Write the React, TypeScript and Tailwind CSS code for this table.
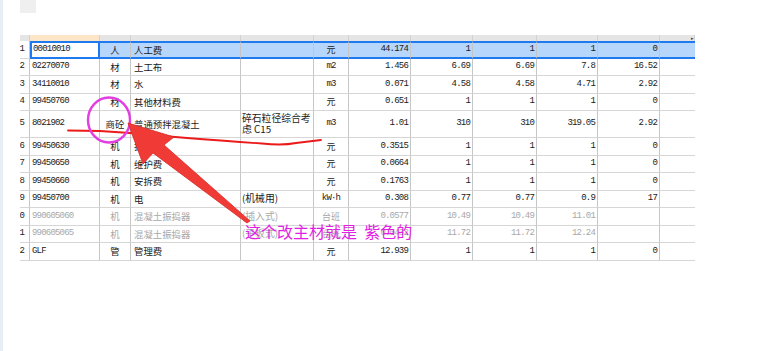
import React from "react";

type Row = {
  n: string;
  code: string;
  type: string;
  name: string;
  spec: string[];
  unit: string;
  vals: string[];
  gray?: boolean;
  tall?: boolean;
  sel?: boolean;
};

const rows: Row[] = [
  { n: "1", code: "00010010", type: "人", name: "人工费", spec: [], unit: "元", vals: ["44.174", "1", "1", "1", "0"], sel: true },
  { n: "2", code: "02270070", type: "材", name: "土工布", spec: [], unit: "m2", vals: ["1.456", "6.69", "6.69", "7.8", "16.52"] },
  { n: "3", code: "34110010", type: "材", name: "水", spec: [], unit: "m3", vals: ["0.071", "4.58", "4.58", "4.71", "2.92"] },
  { n: "4", code: "99450760", type: "材", name: "其他材料费", spec: [], unit: "元", vals: ["0.651", "1", "1", "1", "0"] },
  { n: "5", code: "8021902", type: "商砼", name: "普通预拌混凝土", spec: ["碎石粒径综合考", "虑 C15"], unit: "m3", vals: ["1.01", "310", "310", "319.05", "2.92"], tall: true },
  { n: "6", code: "99450630", type: "机", name: "折旧费", spec: [], unit: "元", vals: ["0.3515", "1", "1", "1", "0"] },
  { n: "7", code: "99450650", type: "机", name: "维护费", spec: [], unit: "元", vals: ["0.0664", "1", "1", "1", "0"] },
  { n: "8", code: "99450660", type: "机", name: "安拆费", spec: [], unit: "元", vals: ["0.1763", "1", "1", "1", "0"] },
  { n: "9", code: "99450700", type: "机", name: "电", spec: ["(机械用)"], unit: "kW·h", vals: ["0.308", "0.77", "0.77", "0.9", "17"] },
  { n: "10", code: "990605060", type: "机", name: "混凝土振捣器", spec: ["(插入式)"], unit: "台班", vals: ["0.0577", "10.49", "10.49", "11.01", ""], gray: true },
  { n: "11", code: "990605065", type: "机", name: "混凝土振捣器", spec: ["(平板式)"], unit: "台班", vals: ["0.0432", "11.72", "11.72", "12.24", ""], gray: true },
  { n: "12", code: "GLF", type: "管", name: "管理费", spec: [], unit: "元", vals: ["12.939", "1", "1", "1", "0"] },
];

const cjk = { fontFamily: '"Noto Sans CJK SC", "Noto Sans", sans-serif' };
const mono = { fontFamily: '"Liberation Mono", "Noto Sans CJK SC", monospace', letterSpacing: "-0.8px" };

const headerW = [10, 70, 31, 110, 73, 35, 62, 62, 64, 61, 62, 35];
const cols = "grid grid-cols-[10px_70px_31px_110px_73px_35px_62px_62px_64px_61px_62px_35px]";

function App() {
  return (
    <div className="relative flex w-[780px] h-[351px] overflow-hidden bg-white">
      <div className="w-[3px] shrink-0 bg-[#e8eef6]" />
      <div className="flex flex-col pl-[17px]">
        <div className="w-[16px] h-[13px] bg-[#efefef]" />
        <div className="h-[22px]" />
        {/* header */}
        <div className={"relative h-[6px] bg-[#e5e5e5] " + cols}>
          {headerW.map((_, i) => (
            <div
              key={i}
              className={"h-[6px] border-r border-[#d2d2d2] " + (i === 1 ? "bg-[#fde6c8]" : "")}
            />
          ))}
          <div className="absolute right-[1px] top-[1px] text-[5px] leading-[5px] text-[#444]">▸</div>
        </div>
        {/* rows */}
        {rows.map((r) => {
          const txt = r.gray ? "text-[#a8a8a8]" : "text-[#1a1a1a]";
          const h = r.tall ? "h-[27px]" : "h-[17.5px]";
          const line = r.sel
            ? " border-t-2 border-b-2 border-t-[#1f7af0] border-b-[#1f7af0] bg-[#b6d6fc]"
            : " border-b border-b-[#d6d6d6]";
          const cell = "flex items-center overflow-hidden border-r border-r-[#c6c6c6] " + h + line;
          return (
            <div key={r.n} className={cols + " " + txt}>
              <div
                className={
                  "flex items-center justify-end overflow-hidden pr-[5px] border-r border-r-[#c6c6c6] border-b border-b-[#d6d6d6] bg-white text-[#222] text-[9px] " +
                  h
                }
                style={mono}
              >
                {r.n}
              </div>
              <div
                className={
                  r.sel
                    ? "flex items-center overflow-hidden border-2 border-[#1f7af0] bg-white pl-[1px] text-[9px] " + h
                    : "flex items-center overflow-hidden border-r border-r-[#c6c6c6] border-b border-b-[#d6d6d6] pl-[2px] text-[9px] " + h
                }
                style={mono}
              >
                {r.code}
              </div>
              <div className={cell + " justify-center text-[9.4px]"} style={cjk}>
                {r.type}
              </div>
              <div className={cell + " pl-[3px] text-[9.4px] whitespace-nowrap"} style={cjk}>
                {r.name}
              </div>
              <div
                className={cell + " flex-col !items-start justify-center pl-[1px] text-[9.8px] leading-[11px] whitespace-nowrap"}
                style={cjk}
              >
                {r.spec.map((s) => (
                  <span key={s}>{s}</span>
                ))}
              </div>
              <div
                className={cell + " justify-center text-[9px]"}
                style={r.unit === "元" || r.unit === "台班" ? cjk : mono}
              >
                {r.unit}
              </div>
              {r.vals.map((v, i) => (
                <div key={i} className={cell + " justify-end pr-[2px] text-[9px]"} style={mono}>
                  {v}
                </div>
              ))}
              <div className={cell + " border-r-0"} />
            </div>
          );
        })}
      </div>

      {/* annotations overlay */}
      <svg className="pointer-events-none absolute left-0 top-0" width="780" height="351" viewBox="0 0 780 351">
        <path
          d="M68 130.5 L100 131 L130 133 C160 136 200 139 240 142 L262 143.5 C276 145 286 145 296 143 L321 140"
          fill="none"
          stroke="#ec1b1b"
          strokeWidth="1.8"
          strokeLinecap="round"
        />
        <ellipse cx="109" cy="120" rx="21" ry="22.5" fill="none" stroke="#e23ee2" strokeWidth="2.4" />
        <polygon
          points="128,123 174,137 164,145 250,221 247,223 153,153 143,164"
          fill="#ef3a36"
          stroke="#d92a26"
          strokeWidth="0.8"
          strokeLinejoin="round"
        />
      </svg>
      <div
        className="absolute left-[245px] top-[222px] whitespace-pre text-[16px] leading-[18px] text-[#e21fe2]"
        style={cjk}
      >
        这个改主材就是  紫色的
      </div>
    </div>
  );
}

export default App;
